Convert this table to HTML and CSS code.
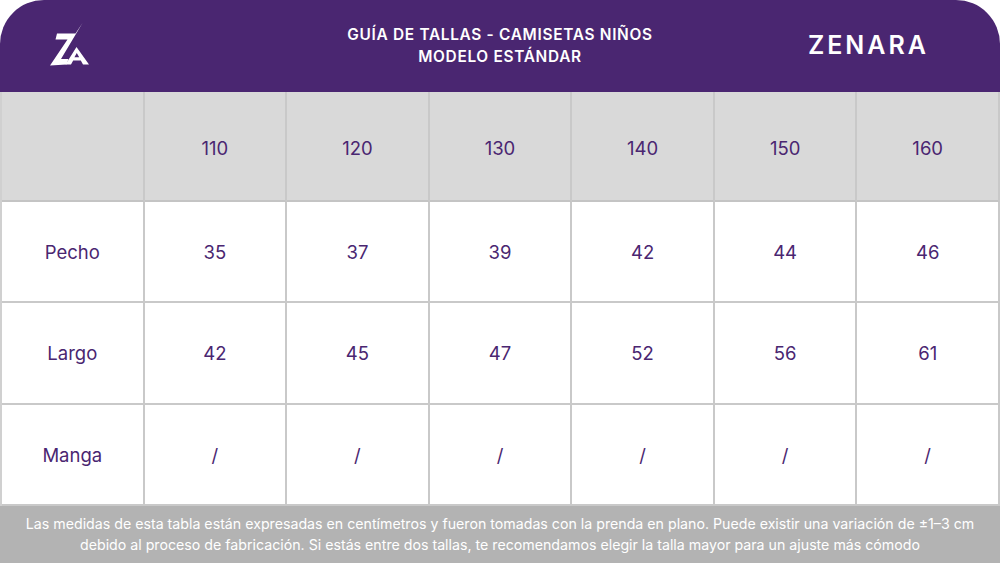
FILE: index.html
```html
<!DOCTYPE html>
<html lang="es">
<head>
<meta charset="utf-8">
<title>Guía de tallas - Camisetas niños</title>
<link rel="stylesheet" href="styles.css">
</head>
<body>
<div class="page">
  <header class="top">
    <div class="logo">
      <svg width="42" height="46" viewBox="50 20 42 46" aria-hidden="true">
        <path fill="#fff" d="M58 32.5 L76.5 32.5 L83.5 22 L62 58 L69.5 58 L67.5 63.5 L51 64.5 L68.5 38.5 L56.5 38.5 Z"/>
        <path fill="#fff" fill-rule="evenodd" d="M77.5 46 L90 63.5 L84 63.5 L81.8 59.5 L74.2 59.5 L72 63.5 L66.5 63.5 Z M77.8 52 L80.2 56.3 L75.4 56.3 Z"/>
      </svg>
    </div>
    <div class="title">
      <div>GUÍA DE TALLAS - CAMISETAS NIÑOS</div>
      <div>MODELO ESTÁNDAR</div>
    </div>
    <div class="brand">ZENARA</div>
  </header>
  <main class="table">
    <div class="cell head"></div>
    <div class="cell head">110</div>
    <div class="cell head">120</div>
    <div class="cell head">130</div>
    <div class="cell head">140</div>
    <div class="cell head">150</div>
    <div class="cell head">160</div>

    <div class="cell">Pecho</div>
    <div class="cell">35</div>
    <div class="cell">37</div>
    <div class="cell">39</div>
    <div class="cell">42</div>
    <div class="cell">44</div>
    <div class="cell">46</div>

    <div class="cell">Largo</div>
    <div class="cell">42</div>
    <div class="cell">45</div>
    <div class="cell">47</div>
    <div class="cell">52</div>
    <div class="cell">56</div>
    <div class="cell">61</div>

    <div class="cell">Manga</div>
    <div class="cell">/</div>
    <div class="cell">/</div>
    <div class="cell">/</div>
    <div class="cell">/</div>
    <div class="cell">/</div>
    <div class="cell">/</div>
  </main>
  <footer class="note">
    Las medidas de esta tabla están expresadas en centímetros y fueron tomadas con la prenda en plano. Puede existir una variación de ±1–3 cm<br>
    debido al proceso de fabricación. Si estás entre dos tallas, te recomendamos elegir la talla mayor para un ajuste más cómodo
  </footer>
</div>
</body>
</html>
```

FILE: styles.css
```css
* { box-sizing: border-box; }
html, body { margin: 0; padding: 0; background: #fff; }
body { font-family: "Inter", "Liberation Sans", sans-serif; }

.page {
  width: 1000px;
  height: 563px;
  display: flex;
  flex-direction: column;
  overflow: hidden;
}

.top {
  height: 92px;
  flex: none;
  background: #4a2671;
  border-radius: 44px 44px 0 0;
  display: grid;
  grid-template-columns: 1fr auto 1fr;
  align-items: center;
  color: #fff;
}

.logo {
  padding-left: 49px;
  display: flex;
  align-items: center;
  padding-bottom: 4px;
}

.title {
  text-align: center;
  font-weight: 600;
  font-size: 15.4px;
  line-height: 22px;
  letter-spacing: 0.7px;
  padding-bottom: 1px;
}

.brand {
  justify-self: end;
  padding-right: 71px;
  font-size: 25px;
  font-weight: 600;
  letter-spacing: 3px;
  padding-bottom: 2px;
}

.table {
  flex: none;
  display: grid;
  grid-template-columns: repeat(7, 1fr);
  grid-template-rows: 110px 101px 102px 101px;
  border-left: 2px solid #d0d0d0;
}

.cell {
  display: flex;
  align-items: center;
  justify-content: center;
  border-right: 2px solid #c9c9c9;
  border-bottom: 2px solid #c9c9c9;
  color: #4a2671;
  font-size: 18.5px;
  background: #fff;
}

.cell.head {
  background: #d9d9d9;
  border-bottom-color: #c4c4c4;
  padding-top: 3px;
}

.note {
  flex: 1;
  background: #b3b3b3;
  color: #fff;
  text-align: center;
  font-size: 14.2px;
  line-height: 21px;
  padding-top: 7px;
}
```
